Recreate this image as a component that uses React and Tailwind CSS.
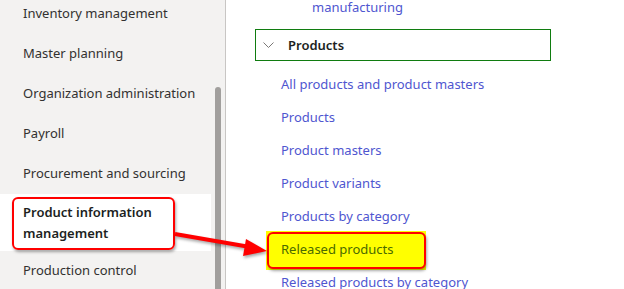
import React from "react";

const leftItems = [
  "Inventory management",
  "Master planning",
  "Organization administration",
  "Payroll",
  "Procurement and sourcing",
];

const links = [
  "All products and product masters",
  "Products",
  "Product masters",
  "Product variants",
  "Products by category",
  "Released products",
  "Released products by category",
];

export default function App() {
  return (
    <div
      className="relative flex w-[624px] h-[289px] overflow-hidden bg-white text-[13px]"
      style={{ fontFamily: '"Noto Sans", "Open Sans", sans-serif' }}
    >
      {/* Left navigation */}
      <div className="relative flex w-[226px] shrink-0 bg-[#f3f2f1] border-r border-[#c8c6c4]">
        <div className="w-[211px] mt-[-6px] flex flex-col">
          {leftItems.map((t) => (
            <div key={t} className="shrink-0 h-[40px] flex items-center pl-[23px] text-[#323130]">
              {t}
            </div>
          ))}
          <div className="shrink-0 h-[57px] bg-white flex flex-col justify-center pl-[23px] font-semibold text-[#201f1e] leading-[21px]">
            <span>Product information</span>
            <span>management</span>
          </div>
          <div className="shrink-0 h-[40px] flex items-center pl-[23px] text-[#323130]">Production control</div>
        </div>
        <div className="absolute left-[215px] top-[87px] bottom-0 w-[6px] rounded-t-[3px] bg-[#a19f9d]" />
      </div>

      {/* Right panel */}
      <div className="flex-1 flex flex-col">
        <div className="shrink-0 mt-[-3px] h-[20px] pl-[86px] leading-[20px] text-[#4f56d0]">manufacturing</div>
        <div className="shrink-0 mt-[12px] ml-[29px] w-[296px] h-[32px] border border-[#107c10] flex items-center">
          <svg className="ml-[7px] mr-[14px]" width="11" height="7" viewBox="0 0 11 7">
            <path d="M0.5 0.5 L5.5 5.5 L10.5 0.5" fill="none" stroke="#7a7876" strokeWidth="1" />
          </svg>
          <span className="font-semibold text-[#201f1e] mt-[1px]">Products</span>
        </div>
        <div className="shrink-0 mt-[7px] flex flex-col">
          {links.map((t) => (
            <div
              key={t}
              className={
                "shrink-0 h-[33px] flex items-center pl-[55px] " +
                (t === "Released products" ? "relative z-10 text-[#4a6a00]" : "text-[#4f56d0]")
              }
            >
              {t}
            </div>
          ))}
        </div>
      </div>

      {/* Annotation: box around selected nav item */}
      <div className="absolute left-[12px] top-[197px] w-[163px] h-[53px] rounded-[6px] border-2 border-[#ff0000] shadow-[1px_2px_3px_rgba(0,0,0,0.35)]" />

      {/* Annotation: yellow highlight */}
      <div className="absolute left-[266px] top-[231px] w-[160px] h-[39px] bg-[#ffff00]" />
      <div className="absolute left-[267px] top-[232px] w-[159px] h-[37px] rounded-[6px] border-2 border-[#ff0000] bg-[#ffff00] shadow-[1px_2px_3px_rgba(0,0,0,0.35)]" />

      {/* Arrow */}
      <svg className="absolute left-0 top-0 pointer-events-none" width="624" height="289" style={{ filter: "drop-shadow(1px 2px 1.5px rgba(0,0,0,0.35))" }}>
        <line x1="175" y1="234" x2="250" y2="247" stroke="#ff0000" strokeWidth="4" />
        <polygon points="267,251 246,239 243,256" fill="#ff0000" />
      </svg>
    </div>
  );
}
